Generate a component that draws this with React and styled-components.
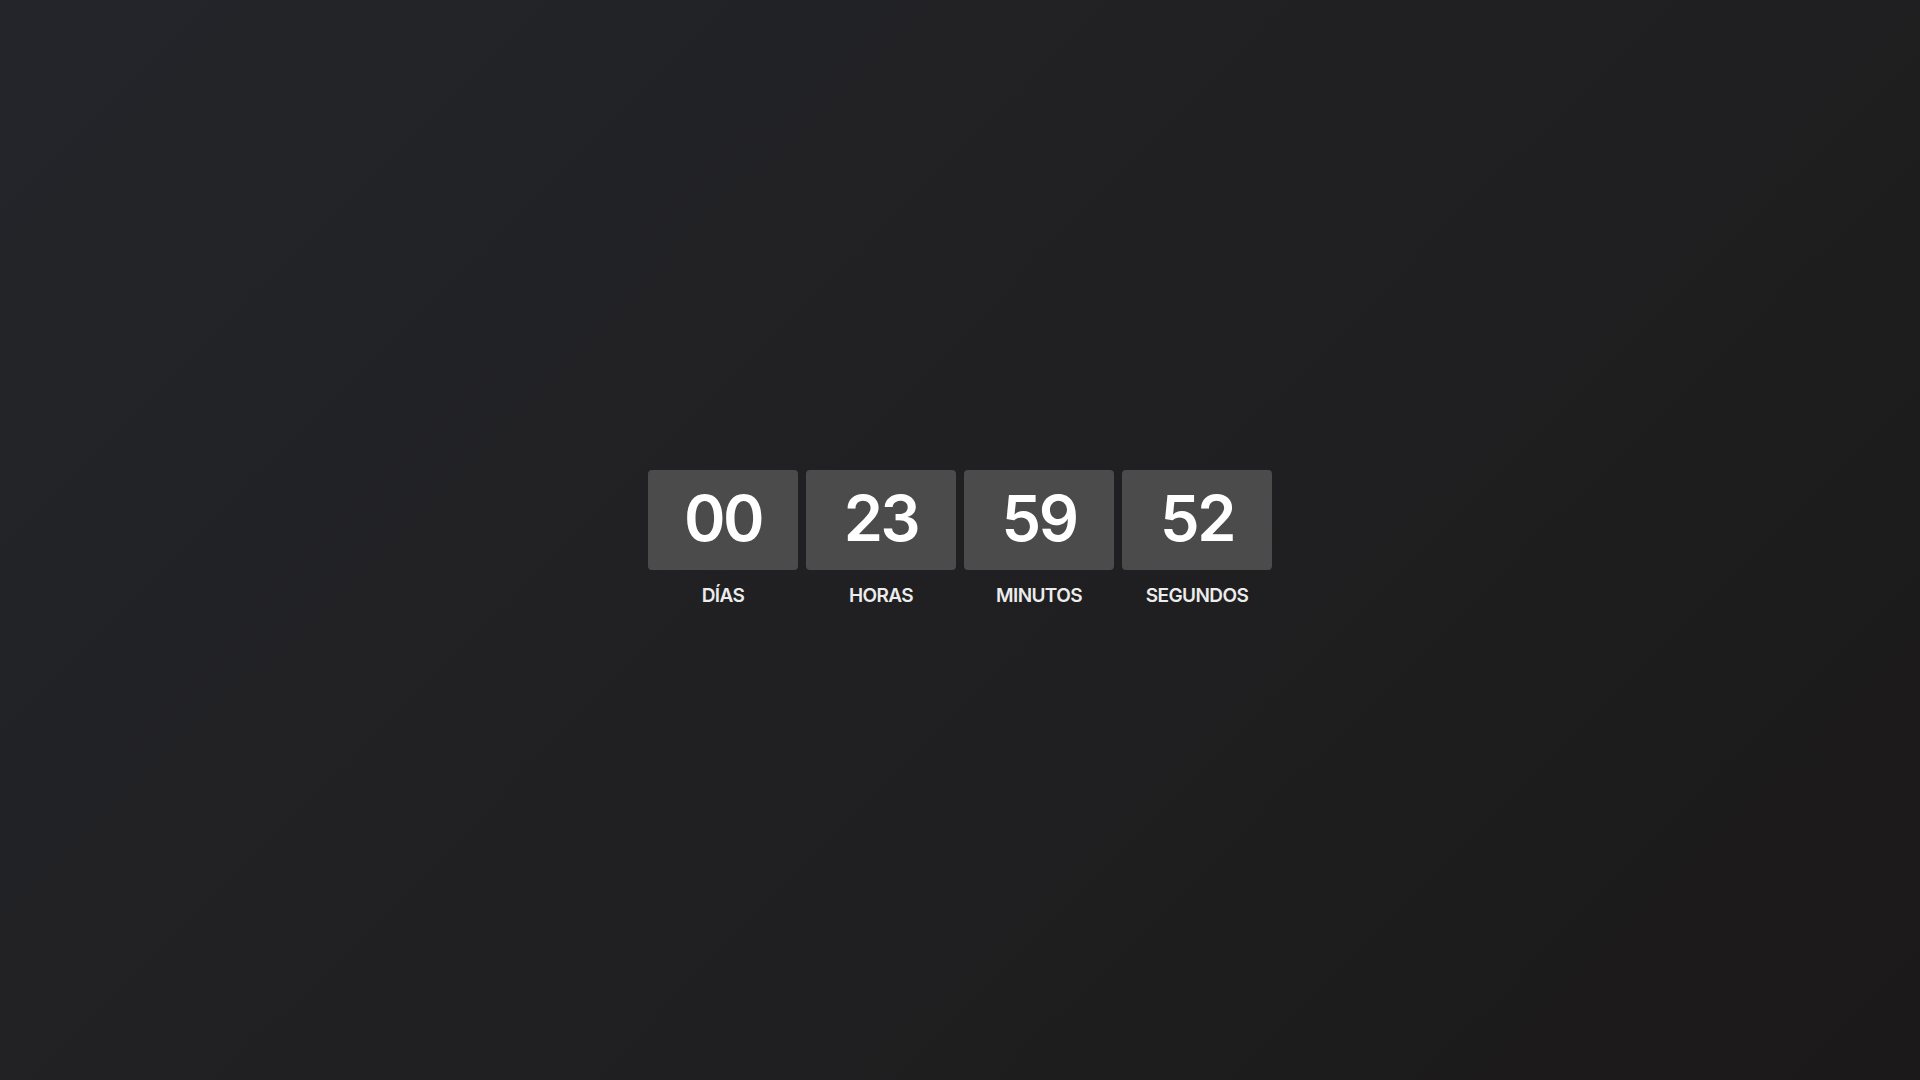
import React from 'react';
import styled, { createGlobalStyle } from 'styled-components';

const GlobalStyle = createGlobalStyle`
html, body, #root {
    margin: 0;
    height: 100%;
}
body {
    font-family: "Inter", "Liberation Sans", sans-serif;
    background: linear-gradient(135deg, #24252a 0%, #202022 50%, #1b1919 100%);
}
`

const Page = styled.main`
height: 100vh;
display: flex;
align-items: center;
justify-content: center;
`

const Countdown = styled.div`
display: flex;
gap: 8px;
margin-top: -4px;
`

const Unit = styled.div`
display: flex;
flex-direction: column;
align-items: center;
`

const Digits = styled.div`
width: 150px;
height: 100px;
box-sizing: border-box;
padding-bottom: 3px;
border-radius: 4px;
background: #4b4b4b;
color: #fff;
display: grid;
place-items: center;
font-size: 63px;
font-weight: 600;
letter-spacing: -2.5px;
`

const Label = styled.span`
margin-top: 14px;
color: #ececec;
font-size: 19px;
font-weight: 600;
letter-spacing: -0.6px;
text-transform: uppercase;
`

const units = [
    { value: '00', label: 'Días' },
    { value: '23', label: 'Horas' },
    { value: '59', label: 'Minutos' },
    { value: '52', label: 'Segundos' },
]

export default function App() {
    return (
        <>
            <GlobalStyle />
            <Page>
                <Countdown>
                    {units.map(u => (
                        <Unit key={u.label}>
                            <Digits>{u.value}</Digits>
                            <Label>{u.label}</Label>
                        </Unit>
                    ))}
                </Countdown>
            </Page>
        </>
    )
}
